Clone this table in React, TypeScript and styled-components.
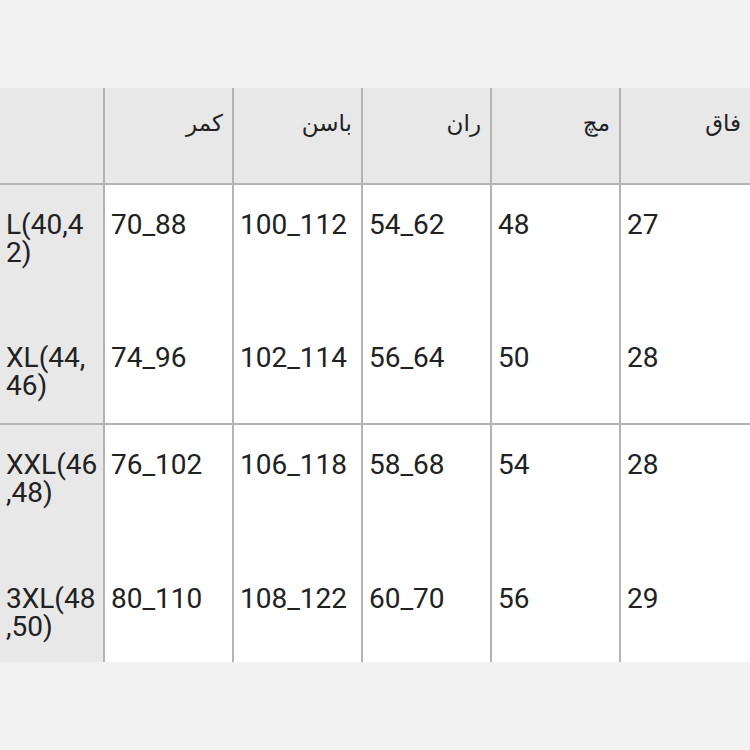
import React from "react";
import styled, { createGlobalStyle } from "styled-components";

const Global = createGlobalStyle`
  html, body { margin: 0; padding: 0; background: #f2f2f2; }
  body { font-family: Roboto, "Liberation Sans", sans-serif; }
`;

const Page = styled.div`
  width: 750px;
  height: 750px;
  background: #f2f2f2;
  padding-top: 88px;
  box-sizing: border-box;
  overflow: hidden;
`;

const Table = styled.div`
  display: grid;
  grid-template-columns: 105px repeat(4, 129px) 1fr;
  grid-template-rows: 97px 133px 107px 134px 103px;
  width: 750px;
  background: #ffffff;
`;

type CellKind = "head" | "label" | "data";

const Cell = styled.div<{ $kind: CellKind; $last?: boolean; $rule?: boolean }>`
  box-sizing: border-box;
  background: ${(p) => (p.$kind === "data" ? "#ffffff" : "#e8e8e8")};
  border-right: ${(p) => (p.$last ? "none" : "2px solid #b3b3b3")};
  border-bottom: ${(p) => (p.$rule ? "2px solid #b3b3b3" : "none")};
  color: #212121;
  font-family: ${(p) =>
    p.$kind === "head"
      ? `"DejaVu Sans", "Noto Sans", sans-serif`
      : `Roboto, "Liberation Sans", sans-serif`};
  font-size: ${(p) => (p.$kind === "head" ? "23px" : "28px")};
  line-height: 28px;
  text-align: ${(p) => (p.$kind === "head" ? "right" : "left")};
  direction: ${(p) => (p.$kind === "head" ? "rtl" : "ltr")};
  padding: ${(p) =>
    p.$kind === "head"
      ? "21px 9px 0 8px"
      : p.$kind === "label"
      ? "26px 2px 0 6px"
      : "26px 6px 0 6px"};
  white-space: nowrap;
`;

const LabelLine = styled.span`
  display: block;
`;

const headers = ["", "کمر", "باسن", "ران", "مچ", "فاق"];

const rows: { label: string[]; values: string[]; rule: boolean }[] = [
  { label: ["L(40,4", "2)"], values: ["70_88", "100_112", "54_62", "48", "27"], rule: false },
  { label: ["XL(44,", "46)"], values: ["74_96", "102_114", "56_64", "50", "28"], rule: true },
  { label: ["XXL(46", ",48)"], values: ["76_102", "106_118", "58_68", "54", "28"], rule: false },
  { label: ["3XL(48", ",50)"], values: ["80_110", "108_122", "60_70", "56", "29"], rule: false },
];

export default function App() {
  return (
    <>
      <Global />
      <Page>
        <Table>
          {headers.map((h, i) => (
            <Cell key={"h" + i} $kind="head" $rule $last={i === headers.length - 1}>
              {h}
            </Cell>
          ))}
          {rows.map((r, ri) => (
            <React.Fragment key={ri}>
              <Cell $kind="label" $rule={r.rule}>
                {r.label.map((l, li) => (
                  <LabelLine key={li}>{l}</LabelLine>
                ))}
              </Cell>
              {r.values.map((v, vi) => (
                <Cell key={vi} $kind="data" $rule={r.rule} $last={vi === r.values.length - 1}>
                  {v}
                </Cell>
              ))}
            </React.Fragment>
          ))}
        </Table>
      </Page>
    </>
  );
}
